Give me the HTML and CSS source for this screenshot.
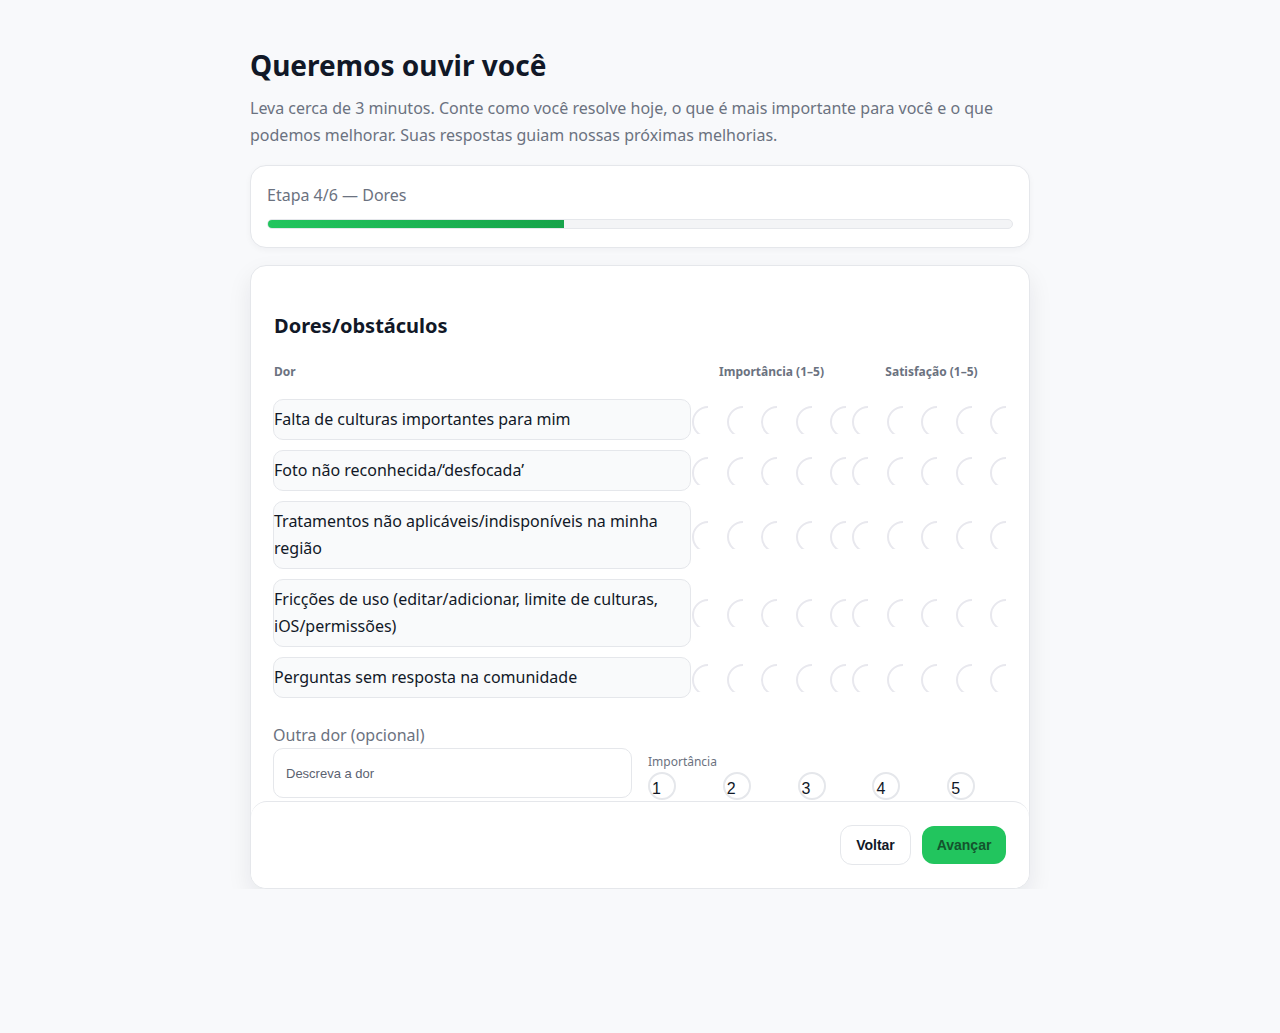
FILE: index.html
```html
<!DOCTYPE html>
<html lang="pt-BR">
<head>
<meta charset="utf-8">
<title>Queremos ouvir você</title>
<link rel="stylesheet" href="styles.css">
</head>
<body>
<main class="wrap">
  <h1 class="title">Queremos ouvir você</h1>
  <p class="lead">Leva cerca de 3 minutos. Conte como você resolve hoje, o que é mais importante para você e o que podemos melhorar. Suas respostas guiam nossas próximas melhorias.</p>

  <section class="card progress-card">
    <div class="step">Etapa 4/6 — Dores</div>
    <div class="track"><div class="fill" style="width:39.8%"></div></div>
  </section>

  <section class="card main-card">
    <div class="body">
      <h2 class="section-title">Dores/obstáculos</h2>
      <div class="grid">
        <div class="th">Dor</div>
        <div class="th center">Importância (1–5)</div>
        <div class="th center">Satisfação (1–5)</div>

        <div class="pain">Falta de culturas importantes para mim</div>
        <div class="radios"><span class="r"></span><span class="r"></span><span class="r"></span><span class="r"></span><span class="r"></span></div>
        <div class="radios"><span class="r"></span><span class="r"></span><span class="r"></span><span class="r"></span><span class="r"></span></div>

        <div class="pain">Foto não reconhecida/‘desfocada’</div>
        <div class="radios"><span class="r"></span><span class="r"></span><span class="r"></span><span class="r"></span><span class="r"></span></div>
        <div class="radios"><span class="r"></span><span class="r"></span><span class="r"></span><span class="r"></span><span class="r"></span></div>

        <div class="pain">Tratamentos não aplicáveis/indisponíveis na minha região</div>
        <div class="radios"><span class="r"></span><span class="r"></span><span class="r"></span><span class="r"></span><span class="r"></span></div>
        <div class="radios"><span class="r"></span><span class="r"></span><span class="r"></span><span class="r"></span><span class="r"></span></div>

        <div class="pain">Fricções de uso (editar/adicionar, limite de culturas, iOS/permissões)</div>
        <div class="radios"><span class="r"></span><span class="r"></span><span class="r"></span><span class="r"></span><span class="r"></span></div>
        <div class="radios"><span class="r"></span><span class="r"></span><span class="r"></span><span class="r"></span><span class="r"></span></div>

        <div class="pain">Perguntas sem resposta na comunidade</div>
        <div class="radios"><span class="r"></span><span class="r"></span><span class="r"></span><span class="r"></span><span class="r"></span></div>
        <div class="radios"><span class="r"></span><span class="r"></span><span class="r"></span><span class="r"></span><span class="r"></span></div>
      </div>

      <div class="other-label">Outra dor (opcional)</div>
      <div class="other">
        <input class="other-input" type="text" placeholder="Descreva a dor">
        <div class="other-imp">
          <div class="small-label">Importância</div>
          <div class="nums">
            <span class="num">1</span>
            <span class="num">2</span>
            <span class="num">3</span>
            <span class="num">4</span>
            <span class="num">5</span>
          </div>
        </div>
      </div>
    </div>
    <footer class="footer">
      <button class="btn btn-back" type="button">Voltar</button>
      <button class="btn btn-next" type="button">Avançar</button>
    </footer>
  </section>
</main>
</body>
</html>
```

FILE: styles.css
```css
* { box-sizing: border-box; }

html, body { margin: 0; padding: 0; }

body {
  background: #f8f9fb;
  font-family: "Noto Sans", "Open Sans", sans-serif;
  color: #111827;
}

.wrap {
  width: 780px;
  margin: 0 auto;
  padding-top: 46px;
}

.title {
  margin: 0;
  font-size: 28px;
  line-height: 38px;
  font-weight: 700;
  color: #111827;
}

.lead {
  margin: 11px 0 16px;
  font-size: 16px;
  line-height: 27px;
  color: #6b7280;
}

.card {
  background: #ffffff;
  border: 1px solid #e5e7eb;
  border-radius: 16px;
}

.progress-card {
  padding: 17px 16px 18px 16px;
  box-shadow: 0 2px 6px rgba(17, 24, 39, 0.04);
}

.step {
  font-size: 16px;
  line-height: 24px;
  color: #6b7280;
}

.track {
  margin-top: 12px;
  height: 10px;
  border: 1px solid #e5e7eb;
  border-radius: 6px;
  background: #f3f4f6;
  overflow: hidden;
}

.fill {
  height: 100%;
  background: linear-gradient(90deg, #22c55e, #16a34a);
}

.main-card {
  margin-top: 17px;
  overflow: hidden;
  box-shadow: 0 10px 24px rgba(17, 24, 39, 0.08);
}

.body {
  height: 535px;
  overflow: hidden;
  padding: 46px 23px 0 22px;
}

.section-title {
  margin: 0 0 24px 1px;
  font-size: 20px;
  line-height: 28px;
  font-weight: 700;
  color: #111827;
}

.grid {
  display: grid;
  grid-template-columns: 418px 160px 160px;
  row-gap: 10px;
  align-items: center;
}

.th {
  font-size: 12px;
  line-height: 16px;
  font-weight: 700;
  color: #6b7280;
  padding-left: 1px;
  margin-bottom: 9px;
}

.th.center { text-align: center; }

.pain {
  background: #f9fafb;
  border: 1px solid #e5e7eb;
  border-radius: 10px;
  padding: 6px 0;
  font-size: 16px;
  line-height: 27px;
  color: #111827;
}

.radios {
  display: flex;
  padding-left: 1px;
}

.r {
  display: block;
  flex: none;
  width: 16px;
  height: 28px;
  margin-right: 18.5px;
  overflow: hidden;
}

.r::before {
  content: "";
  display: block;
  width: 28px;
  height: 28px;
  border: 2px solid #e8e8ee;
  border-radius: 50%;
}

.other-label {
  margin-top: 25px;
  font-size: 16px;
  line-height: 24px;
  color: #6b7280;
}

.other {
  display: grid;
  grid-template-columns: 359px 1fr;
  column-gap: 16px;
  margin-top: 1px;
}

.other-input {
  height: 50px;
  border: 1px solid #e5e7eb;
  border-radius: 10px;
  padding: 0 12px;
  font-family: "Liberation Sans", Arial, sans-serif;
  font-size: 13px;
  color: #111827;
  background: #fff;
}

.other-input::placeholder { color: #5b6270; }

.small-label {
  margin-top: 6px;
  font-size: 12px;
  line-height: 16px;
  color: #6b7280;
}

.nums {
  display: flex;
  margin-top: 2px;
}

.num {
  display: flex;
  align-items: flex-end;
  flex: none;
  width: 28px;
  height: 28px;
  margin-right: 46.8px;
  padding: 0 0 0 2px;
  border: 2px solid #e5e7eb;
  border-radius: 50%;
  font-family: "Liberation Sans", Arial, sans-serif;
  font-size: 16px;
  line-height: 18px;
  color: #111827;
}

.footer {
  display: flex;
  justify-content: flex-end;
  align-items: center;
  gap: 11px;
  height: 87px;
  padding: 0 23px 1px;
  border-top: 1px solid #e5e7eb;
  border-radius: 16px 16px 0 0;
  background: #fff;
}

.btn {
  font-family: "Liberation Sans", Arial, sans-serif;
  font-size: 14px;
  font-weight: 700;
  border-radius: 12px;
  cursor: pointer;
}

.btn-back {
  height: 40px;
  width: 71px;
  background: #fff;
  border: 1px solid #e5e7eb;
  color: #111827;
}

.btn-next {
  height: 38px;
  width: 84px;
  background: #22c55e;
  border: none;
  color: #14532d;
}
```
